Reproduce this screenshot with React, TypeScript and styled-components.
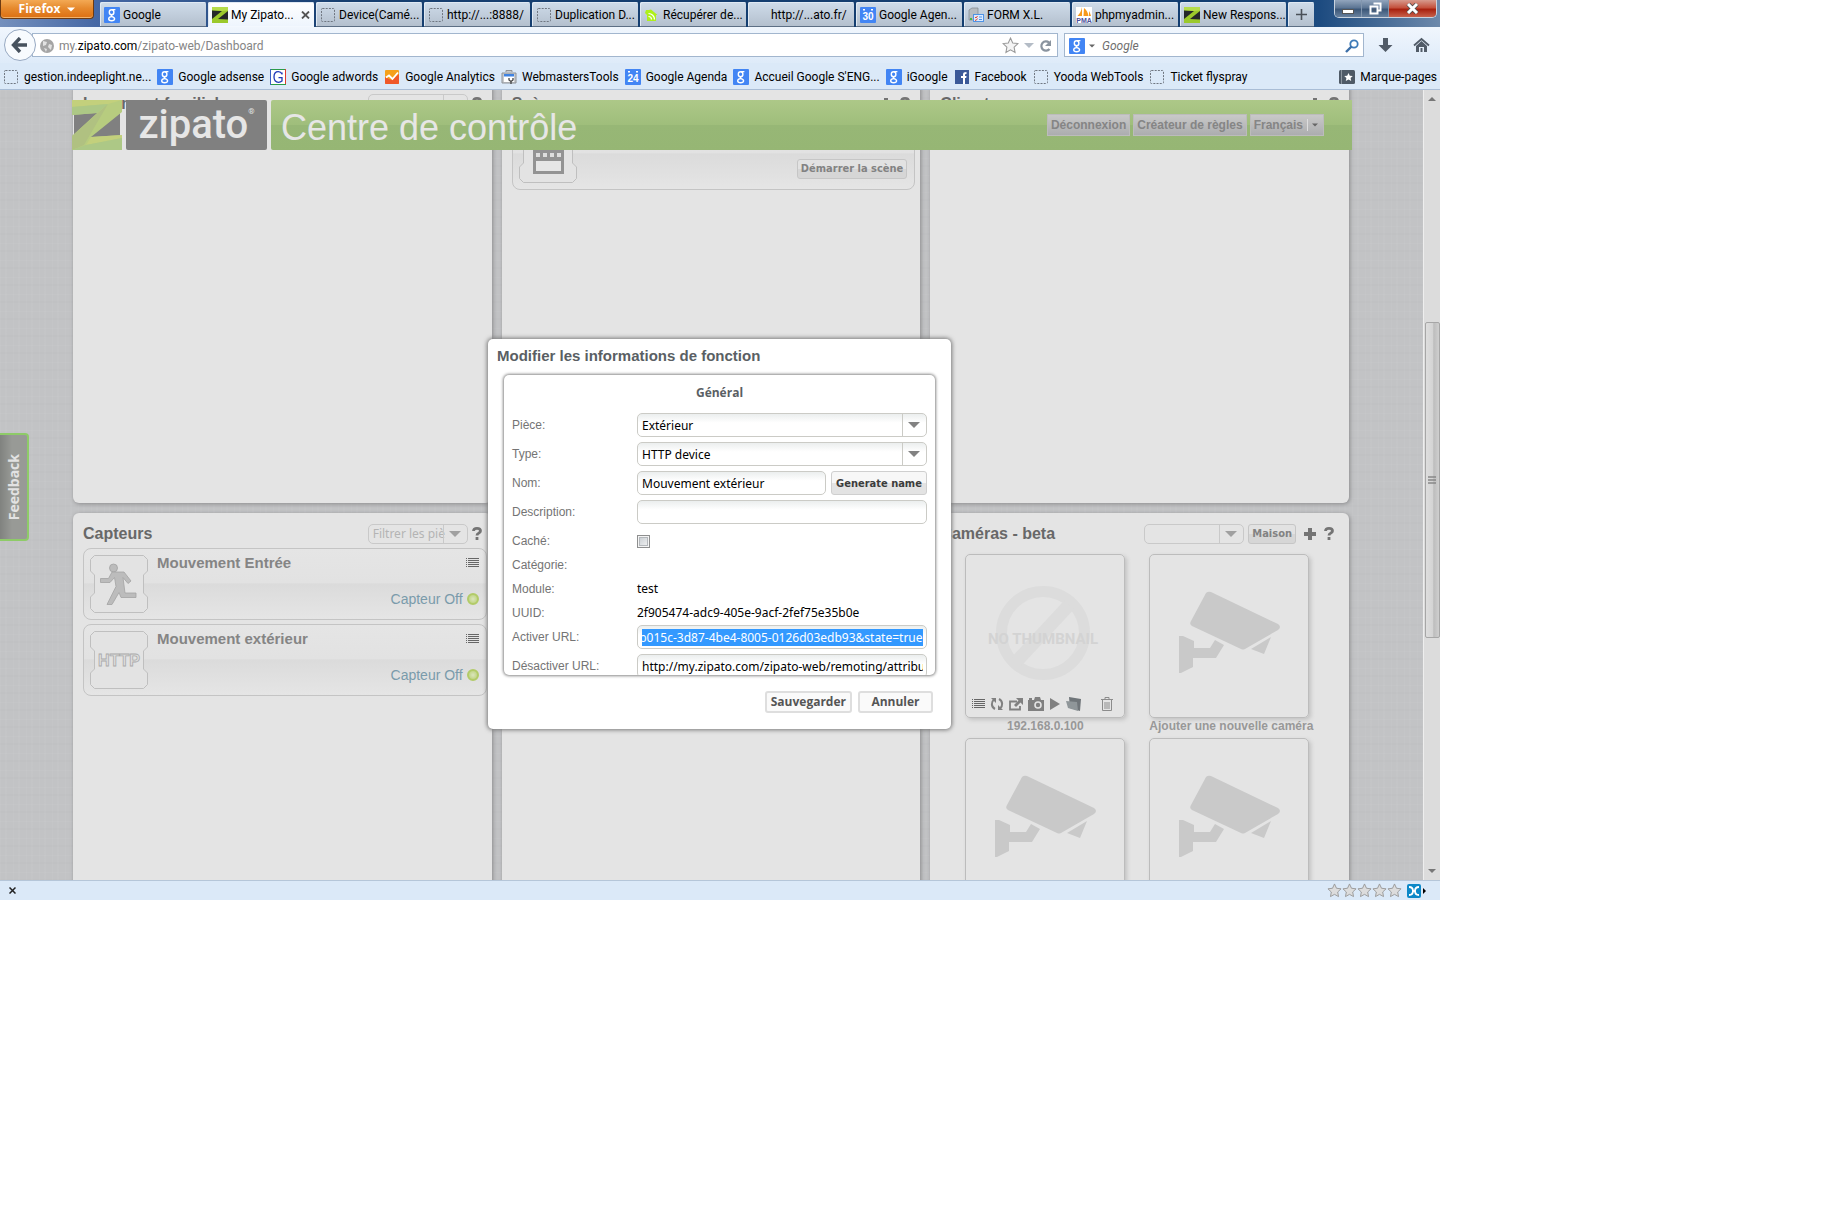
import React, { useEffect, useRef } from "react";
import styled, { createGlobalStyle, css } from "styled-components";

const CHROME = `Roboto, "Noto Sans", sans-serif`;
const UI = `"Noto Sans", "Open Sans", sans-serif`;
const ARIAL = `"Liberation Sans", Arial, sans-serif`;
const BOLD = `"DejaVu Sans Condensed", "DejaVu Sans", sans-serif`;

const GlobalStyle = createGlobalStyle`
  * { box-sizing: border-box; }
  body { margin: 0; background: #fff; font-family: ${ARIAL}; font-size: 12px; color: #000; }
  button, input, select { font: inherit; margin: 0; }
  svg { display: block; flex: none; }
`;

/* ---------- window chrome ---------- */

const Page = styled.div`
  height: 100vh;
  padding: 0 388px 312px 0;
`;

const Window = styled.div`
  position: relative;
  height: 100%;
  display: flex;
  flex-direction: column;
  overflow: hidden;
  background: #dbe9f8;
  font-family: ${CHROME};
  font-size: 12px;
`;

const TitleBar = styled.header`
  display: flex;
  flex: none;
  height: 27px;
  background: linear-gradient(90deg, #7590bd 0, #4668a5 96px, #173f70 340px, #123d70 1200px, #1d4b80 1320px, #6d89ab 100%);
`;

const FirefoxButton = styled.button`
  display: flex;
  align-items: center;
  justify-content: center;
  gap: 7px;
  width: 94px;
  height: 19px;
  margin-right: 6px;
  padding: 0;
  border: 1px solid #6d3a12;
  border-top: 0;
  border-radius: 0 0 4px 4px;
  background: linear-gradient(#f3a954, #e68a2e 45%, #dc6f12);
  box-shadow: inset 0 -1px 0 #f2b36c;
  color: #fff;
  font: bold 12px/18px "Open Sans", ${UI};
`;

const Tabs = styled.nav`
  display: flex;
  align-items: flex-end;
  gap: 2px;
`;

const Tab = styled.button<{ $active?: boolean }>`
  display: flex;
  align-items: center;
  gap: 3px;
  width: 106px;
  height: 25px;
  padding: 1px 4px 0;
  border: 0;
  border-bottom: 1px solid #5d6f85;
  border-radius: 2px 2px 0 0;
  background: linear-gradient(#cfdcea, #b4c0ce);
  box-shadow: inset 1px 1px 0 #e0e9f3;
  color: #000;
  white-space: nowrap;
  text-align: left;
  ${(p) => p.$active && css`
    border-bottom-color: #f3f8fe;
    background: linear-gradient(#fff, #eef5fd);
  `}
`;

const TabLabel = styled.span`
  flex: 1;
`;

const NewTab = styled(Tab)`
  width: 26px;
  justify-content: center;
`;

const WindowControls = styled.div`
  display: flex;
  height: 18px;
  margin: 0 3px 0 auto;
  border: 1px solid #c9d3df;
  border-top: 0;
  border-radius: 0 0 5px 5px;
  overflow: hidden;
`;

const WindowControl = styled.button<{ $close?: boolean }>`
  display: flex;
  align-items: center;
  justify-content: center;
  width: ${(p) => (p.$close ? 47 : 27)}px;
  padding: 0;
  border: 0;
  border-right: ${(p) => (p.$close ? "0" : "1px solid #8296ae")};
  background: ${(p) => p.$close
    ? "linear-gradient(#d79a8d, #c4513d 45%, #a8210f 55%, #c8614b)"
    : "linear-gradient(#92a5bd, #5d7694 45%, #3c5778 55%, #69829f)"};
`;

const NavBar = styled.div`
  display: flex;
  align-items: center;
  flex: none;
  height: 36px;
  background: linear-gradient(#f0f6fd, #deebf9);
`;

const BackButton = styled.button`
  display: flex;
  align-items: center;
  justify-content: center;
  width: 32px;
  height: 32px;
  margin: 0 -4px 0 4px;
  padding: 0 2px 0 0;
  border: 1px solid #97a9c2;
  border-radius: 50%;
  background: #f8fbfe;
  z-index: 1;
`;

const UrlBar = styled.div`
  display: flex;
  align-items: center;
  flex: 1;
  gap: 5px;
  height: 24px;
  padding: 1px 5px 0 7px;
  border: 1px solid #a2b6ce;
  background: #fff;
  color: #858585;
`;

const Url = styled.div`
  flex: 1;
  outline: none;
  b { font-weight: normal; color: #000; }
`;

const SearchBar = styled.form`
  display: flex;
  align-items: center;
  gap: 4px;
  width: 300px;
  height: 24px;
  margin: 0 14px 0 6px;
  padding: 1px 4px 0;
  border: 1px solid #a2b6ce;
  background: #fff;
`;

const SearchInput = styled.input`
  flex: 1;
  min-width: 0;
  padding: 0 3px;
  border: 0;
  outline: 0;
  background: none;
  font-style: italic;
  &::placeholder { color: #6f6f6f; opacity: 1; }
`;

const ChromeButton = styled.button`
  display: flex;
  padding: 0;
  border: 0;
  background: none;
`;

const NavActions = styled.div`
  display: flex;
  gap: 20px;
  margin-right: 10px;
`;

const Bookmarks = styled.nav`
  display: flex;
  align-items: center;
  flex: none;
  gap: 6px;
  height: 27px;
  padding: 1px 3px 0;
  border-bottom: 1px solid #a9bdd6;
  background: #dbe9f8;
`;

const Bookmark = styled.a`
  display: flex;
  align-items: center;
  gap: 5px;
  color: #000;
  line-height: 18px;
  white-space: nowrap;
  text-decoration: none;
  &:last-child { margin-left: auto; }
`;

const AddonBar = styled.footer`
  display: flex;
  align-items: center;
  flex: none;
  height: 20px;
  padding: 0 13px 0 9px;
  border-top: 1px solid #b5c6d9;
  background: #dbe9f8;
`;

const Rating = styled.div`
  display: flex;
  margin: 0 5px 0 auto;
`;

/* ---------- page area ---------- */

const Viewport = styled.div`
  position: relative;
  display: flex;
  flex: 1;
  min-height: 0;
`;

const Content = styled.main`
  flex: 1;
  min-width: 0;
  overflow: hidden;
  font-family: ${ARIAL};
  background:
    repeating-linear-gradient(90deg, rgba(255,255,255,.04) 0 1px, transparent 1px 5px, rgba(255,255,255,.03) 5px 7px, transparent 7px 13px),
    repeating-linear-gradient(rgba(255,255,255,.04) 0 1px, transparent 1px 7px, rgba(0,0,0,.01) 7px 9px, transparent 9px 17px),
    #c2c3c5;
`;

const Dashboard = styled.div`
  display: grid;
  grid-template-columns: repeat(3, 1fr);
  grid-auto-rows: 420px;
  gap: 10px;
  margin: -7px 74px 0 73px;
`;

const Panel = styled.section`
  min-width: 0;
  padding: 0 5px 0 10px;
  border-radius: 6px;
  background: #e4e4e4;
  box-shadow: 1px 1px 4px #8a8a8c;
`;

const PanelHeader = styled.header<{ $inset?: boolean }>`
  display: flex;
  align-items: center;
  gap: 4px;
  height: 35px;
  padding: 6px ${(p) => (p.$inset ? 10 : 5)}px 0 0;
`;

const PanelTitle = styled.h2`
  flex: 1;
  margin: 0;
  color: #686868;
  font-size: 16px;
  line-height: 20px;
`;

const IconButton = styled.button<{ $wide?: boolean }>`
  display: flex;
  justify-content: center;
  width: ${(p) => (p.$wide ? 20 : 10)}px;
  padding: 0;
  border: 0;
  background: none;
  color: #747474;
`;

const ComboBox = styled.span<{ $small?: boolean }>`
  display: grid;
  grid-template-columns: 1fr 24px;
  align-items: center;
  width: ${(p) => (p.$small ? "100px" : "100%")};
  height: ${(p) => (p.$small ? 20 : 24)}px;
  border: 1px solid ${(p) => (p.$small ? "#c9c9c9" : "#cbcbc6")};
  border-radius: 5px;
  background: ${(p) => (p.$small ? "#e4e4e4" : "linear-gradient(#ebeeee, #fff 40%)")};
  overflow: hidden;
  svg {
    grid-area: 1 / 2;
    justify-self: center;
    pointer-events: none;
  }
  &::after {
    content: "";
    grid-area: 1 / 2;
    height: 100%;
    border-left: 1px solid ${(p) => (p.$small ? "#c9c9c9" : "#cbcbc6")};
    pointer-events: none;
  }
`;

const Select = styled.select<{ $small?: boolean }>`
  grid-area: 1 / 1 / 2 / 3;
  width: 100%;
  height: 100%;
  padding: 0 ${(p) => (p.$small ? 20 : 24)}px 0 4px;
  border: 0;
  outline: 0;
  appearance: none;
  background: none;
  color: ${(p) => (p.$small ? "#b4b4b4" : "#000")};
  font-family: ${UI};
  font-size: 12px;
`;

const SoftButton = styled.button`
  height: 20px;
  padding: 0 3px;
  border: 1px solid #c6c6c6;
  border-radius: 3px;
  background: linear-gradient(#e2e2e2 50%, #d6d6d6 50%);
  color: #828282;
  font: bold 11px/18px ${BOLD};
  white-space: nowrap;
`;

const Card = styled.article`
  display: flex;
  gap: 9px;
  height: 72px;
  margin-bottom: 4px;
  padding: 6px 7px 6px 6px;
  border: 1px solid #c4c4c4;
  border-radius: 8px;
  background: linear-gradient(#e5e5e5, #e2e2e2 48%, #dbdbdb 50%, #e5e5e5);
`;

const CardBody = styled.div`
  display: flex;
  flex: 1;
  flex-direction: column;
  justify-content: space-between;
  padding-bottom: 4px;
`;

const CardRow = styled.div`
  display: flex;
  align-items: center;
  justify-content: space-between;
`;

const CardTitle = styled.h3`
  margin: 0;
  color: #858585;
  font-size: 15px;
  line-height: 16px;
`;

const Status = styled.span`
  display: flex;
  align-items: center;
  gap: 4px;
  margin-left: auto;
  color: #7a9bab;
  font-size: 14px;
  line-height: 20px;
`;

const Led = styled.i`
  width: 12px;
  height: 12px;
  border: 2px solid #b2cb68;
  border-radius: 50%;
  background: radial-gradient(#dbe5bd, #b9d074);
`;

const CameraGrid = styled.div`
  display: grid;
  grid-template-columns: 160px 160px;
  column-gap: 24px;
  margin: 6px 0 0 25px;
`;

const Figure = styled.figure`
  margin: 0;
`;

const Thumb = styled.div`
  display: flex;
  flex-direction: column;
  align-items: center;
  height: 164px;
  border: 1px solid #bcbcbc;
  border-radius: 5px;
  box-shadow: 2px 2px 4px #c2c2c2;
`;

const Caption = styled.figcaption`
  height: 20px;
  color: #989898;
  font-size: 12px;
  font-weight: bold;
  line-height: 16px;
  text-align: center;
  white-space: nowrap;
`;

const Tools = styled.div`
  display: flex;
  align-items: center;
  align-self: stretch;
  gap: 5px;
  padding: 0 11px 0 6px;
  button:last-child { margin-left: auto; }
`;

/* ---------- fixed brand bar ---------- */

const BrandBar = styled.header`
  position: absolute;
  top: 10px;
  left: 72px;
  right: 88px;
  display: flex;
  height: 50px;
  gap: 4px;
  font-family: ${ARIAL};
`;

const Wordmark = styled.div`
  display: flex;
  justify-content: center;
  width: 141px;
  border-radius: 2px;
  background: #808080;
  color: #e6e6e6;
  font: 500 40px/50px Roboto, sans-serif;
  sup { font-size: 8px; line-height: 24px; }
`;

const Banner = styled.div`
  display: flex;
  align-items: center;
  flex: 1;
  gap: 3px;
  padding: 0 28px 0 10px;
  border-radius: 2px 0 0 2px;
  background: linear-gradient(#adc888, #9fbe7b 50%, #97b776 50%, #96b674);
`;

const BannerTitle = styled.h1`
  flex: 1;
  margin: 0;
  padding-top: 5px;
  color: #e6e6e6;
  font-size: 36px;
  font-weight: normal;
  line-height: 45px;
`;

const BannerButton = styled.button`
  display: flex;
  align-items: center;
  height: 22px;
  padding: 0 3px;
  border: 1px solid #bcbcbc;
  background: linear-gradient(#c9c9c9, #acadaf);
  color: #858585;
  font-size: 12px;
  font-weight: bold;
`;

const MenuArrow = styled.span`
  display: flex;
  margin-left: 4px;
  padding: 4px 2px 4px 4px;
  border-left: 1px solid #dedede;
`;

const Feedback = styled.a`
  position: absolute;
  top: 343px;
  left: 0;
  display: flex;
  align-items: center;
  justify-content: center;
  width: 29px;
  height: 108px;
  border: 2px solid #8ecb68;
  border-left: 0;
  border-radius: 0 4px 4px 0;
  background: linear-gradient(90deg, #80827f, #989a96 12px);
  color: #e2e2e2;
  font: bold 14px/20px "Open Sans", sans-serif;
  text-decoration: none;
  span { writing-mode: vertical-rl; transform: rotate(180deg); }
`;

/* ---------- scroll bar ---------- */

const ScrollBar = styled.div`
  display: flex;
  flex-direction: column;
  align-items: center;
  width: 17px;
  padding: 7px 0;
  border-left: 1px solid #eee;
  background: #dcdcdc;
`;

const ScrollThumb = styled.div`
  display: flex;
  align-items: center;
  justify-content: center;
  width: 15px;
  height: 316px;
  margin: 221px 0 auto;
  border: 1px solid #a6a6a6;
  border-radius: 2px;
  background: linear-gradient(90deg, #dedede, #d4d4d4 50%, #bdbdbd 60%, #cfcfcf);
`;

/* ---------- dialog ---------- */

const Dialog = styled.section`
  position: absolute;
  top: 249px;
  left: 50%;
  width: 463px;
  margin-left: -232px;
  padding: 7px 16px 16px;
  border-radius: 5px;
  background: #fff;
  box-shadow: 0 0 4px 1px #777;
  font-family: ${ARIAL};
`;

const DialogTitle = styled.h2`
  margin: 0 -7px 9px;
  color: #5a5f64;
  font-size: 15px;
  line-height: 20px;
`;

const FormBox = styled.div`
  height: 300px;
  padding: 0 8px;
  border-radius: 5px;
  box-shadow: 0 0 3px 1px #888;
  overflow: hidden;
`;

const FormTitle = styled.h3`
  margin: 0;
  padding: 8px 0 10px;
  color: #5a5f64;
  font: bold 12px/20px "Open Sans", sans-serif;
  text-align: center;
`;

const Row = styled.div<{ $spaced?: boolean }>`
  display: grid;
  grid-template-columns: 125px 1fr;
  align-items: center;
  height: 24px;
  margin-bottom: ${(p) => (p.$spaced ? 5 : 0)}px;
`;

const Label = styled.label`
  color: #747474;
  font-size: 12px;
`;

const Value = styled.output`
  font-family: ${UI};
  font-size: 12px;
  line-height: 16px;
`;

const TextInput = styled.input`
  width: 100%;
  min-width: 0;
  height: 24px;
  padding: 0 3px 0 4px;
  border: 1px solid #cbcbc6;
  border-radius: 5px;
  outline: 0;
  background: linear-gradient(#ebeeee, #fff 40%);
  font-family: ${UI};
  font-size: 12px;
  &::selection { background: #3399ff; color: #fff; }
`;

const NameFields = styled.div`
  display: flex;
  gap: 5px;
`;

const GenerateButton = styled.button`
  flex: none;
  width: 96px;
  height: 24px;
  padding: 2px 0 0;
  border: 1px solid #cfcfcf;
  border-radius: 3px;
  background: linear-gradient(#f7f7f7 50%, #e3e3e3 50%);
  color: #3c3c3c;
  font: bold 11px/20px ${BOLD};
`;

const CheckBox = styled.input`
  width: 13px;
  height: 13px;
  border: 1px solid #8e8f8f;
  appearance: none;
  background: linear-gradient(135deg, #c3c9ce, #f6f6f6);
  box-shadow: inset 0 0 0 1px #f4f4f4, inset 0 0 0 2px #b4b8bc;
`;

const Actions = styled.footer`
  display: flex;
  justify-content: flex-end;
  gap: 6px;
  padding: 16px 2px 0 0;
`;

const ActionButton = styled.button`
  min-width: 75px;
  height: 22px;
  padding: 0 4px;
  border: 2px solid #dedede;
  border-radius: 3px;
  background: #fafafa;
  color: #555;
  font: bold 12px/18px "Open Sans", sans-serif;
`;

/* ---------- icons ---------- */

const G = ({ size = 16 }) => (
  <svg width={size} height={size} viewBox="0 0 16 16">
    <rect width="16" height="16" rx="1" fill="#4285f4" />
    <g fill="none" stroke="#fff" strokeWidth="1.4">
      <ellipse cx="7.6" cy="5.2" rx="2.3" ry="2.5" />
      <path d="M8 2.6h3.4M8.4 7.6c-1.8 1-1.2 1.6 0 2.1M7.8 9.6c-4.2.3-4 4.2-.2 4.2s4-3.4.4-4.2z" />
    </g>
  </svg>
);
const Blank = () => (
  <svg width="16" height="16" viewBox="0 0 16 16">
    <rect x="1.5" y="1.5" width="13" height="13" rx="1" fill="none" stroke="#6f7680" strokeDasharray="2 1.2" />
  </svg>
);
const ZFav = () => (
  <svg width="16" height="16" viewBox="0 0 16 16">
    <rect width="16" height="16" fill="#9bc92b" />
    <path d="M0 3.500 10 4 0 12zM16 4v8.500L6 12z" fill="#25282a" />
    <path d="M0 0h16v3.500L10 4 0 3z" fill="#b5dc4a" />
  </svg>
);
const Calendar = ({ day }: { day: string }) => (
  <svg width="16" height="16" viewBox="0 0 16 16">
    <rect width="16" height="16" rx="1" fill="#4285f4" />
    <path d="M3 2h2v1.500H3zM11 2h2v1.500h-2z" fill="#fff" />
    <text x="8" y="13" textAnchor="middle" fontFamily="Liberation Sans" fontWeight="bold" fontSize="10" fill="#fff">{day}</text>
  </svg>
);
const Home = () => (
  <svg width="16" height="16" viewBox="0 0 16 16">
    <path d="M7 2.500 13.500 8H12v6H3V8L1 6l1-3h3z" fill="#aef01a" />
    <path d="M4.500 6.500a6 6 0 0 1 6 6M4.500 9.500a3 3 0 0 1 3 3" stroke="#fff" strokeWidth="1.200" fill="none" />
  </svg>
);
const FormIcon = () => (
  <svg width="16" height="16" viewBox="0 0 16 16">
    <path d="M1 3 4 1h6v12H1z" fill="#b6bcc2" stroke="#7e868e" strokeWidth=".7" />
    <path d="M2 11h2v2H2z" fill="#4eb543" />
    <rect x="5.500" y="7.500" width="10" height="7" fill="#dcebff" stroke="#4f93e6" />
    <path d="m7 10 1 1 1.500-2M7 13l1 .5 1.500-2" stroke="#e2452c" fill="none" />
    <path d="M11 10h3M11 12.500h3" stroke="#4f93e6" />
  </svg>
);
const Pma = () => (
  <svg width="16" height="16" viewBox="0 0 16 16">
    <rect width="16" height="16" fill="#fff" />
    <path d="M6 0v9H1.500C3.500 7 5.500 4 6 0zM8 1c3 2 4 5 4.500 8H7.500zM13 4c1 2 1.500 3 2 5h-2z" fill="#f79a1c" />
    <text x="8" y="16" textAnchor="middle" fontFamily="Liberation Sans" fontWeight="bold" fontSize="7" fill="#4b4f9a">PMA</text>
  </svg>
);
const Adwords = () => (
  <svg width="16" height="16" viewBox="0 0 16 16">
    <rect x=".5" y=".5" width="15" height="15" fill="#fff" stroke="#2b9b48" />
    <path d="M.5 0v16" stroke="#3b5fc4" /><path d="M15.500 0v15" stroke="#e23a2e" />
    <path d="M12 5.500V3.500M12 5C11 3 9.500 2.700 8.300 2.700 5.500 2.700 4 5 4 8s1.500 5.300 4.500 5.300c1.500 0 2.700-.6 3.500-1.300V8.700H8.500" stroke="#1d38b8" strokeWidth="1.300" fill="none" />
  </svg>
);
const Analytics = () => (
  <svg width="16" height="16" viewBox="0 0 16 16">
    <rect x="1" y="1" width="14" height="14" rx="1" fill="#f5a11b" />
    <path d="M1 8l4 2 3 1 7-6v9a1 1 0 0 1-1 1H2a1 1 0 0 1-1-1z" fill="#f0592a" />
    <path d="m2 8.500 3-2 3.500 3.500L14 3.500" stroke="#fff" strokeWidth="1.800" fill="none" />
  </svg>
);
const Toolbox = () => (
  <svg width="16" height="16" viewBox="0 0 16 16">
    <path d="M5 3V1.500h6V3M1 4h14v10H1z" fill="#c9cbce" stroke="#8d9196" />
    <rect x="3" y="5" width="10" height="8" fill="#fff" />
    <path d="M3 5h10v2.500H3z" fill="#3f82e0" />
    <path d="M8 9v2l2 1.500V15M12 9v2l-2 1.500" stroke="#444" strokeWidth="1.300" fill="none" />
  </svg>
);
const Facebook = () => (
  <svg width="16" height="16" viewBox="0 0 16 16">
    <rect x="1" y="1" width="14" height="14" fill="#3b5998" />
    <path d="M9 15V9H7V7h2V5.500C9 3.800 10 3 12.500 3v2c-1.200 0-1.500.2-1.500 1v1h1.500l-.3 2H11v6z" fill="#fff" />
  </svg>
);
const StarPath = "m8 1 2.100 4.600 4.900.6-3.600 3.400.9 4.900L8 12.100l-4.300 2.400.9-4.900L1 6.200l4.900-.6z";
const BookmarksIcon = () => (
  <svg width="16" height="16" viewBox="0 0 16 16">
    <rect y="1" width="16" height="14" rx="1.500" fill="#4f5a66" />
    <path d="M2.500 1v14" stroke="#8c959e" />
    <path d="m9.500 4 1.300 2.700 3 .3-2.200 2 .6 3-2.700-1.500L6.800 12l.6-3-2.200-2 3-.3z" fill="#fff" />
  </svg>
);
const Star = ({ size = 16, fill = "#f4f4f4" }) => (
  <svg width={size} height={size} viewBox="0 0 16 16"><path d={StarPath} fill={fill} stroke="#999" /></svg>
);
const Triangle = ({ w = 12, h = 6, fill = "#858585", up = false }) => (
  <svg width={w} height={h} viewBox="0 0 12 6"><path d={up ? "M0 6h12L6 0z" : "M0 0h12L6 6z"} fill={fill} /></svg>
);
const Reload = () => (
  <svg width="13" height="14" viewBox="0 0 13 14">
    <path d="M10.500 10A4.600 4.600 0 1 1 10 3.600" fill="none" stroke="#8a949f" strokeWidth="2.200" />
    <path d="M12 1v6H6z" fill="#8a949f" />
  </svg>
);
const List = () => (
  <svg width="13" height="10" viewBox="0 0 13 10">
    <path d="M0 .5h1M0 2.500h1M0 4.500h1M0 6.500h1M0 8.500h1M2 .5h11M2 2.500h11M2 4.500h11M2 6.500h11M2 8.500h11" stroke="#666" />
  </svg>
);
const Plus = () => (
  <svg width="12" height="12" viewBox="0 0 12 12"><path d="M4 0h4v4h4v4H8v4H4V8H0V4h4z" fill="currentColor" /></svg>
);
const Help = () => (
  <svg width="10" height="13" viewBox="0 0 10 13">
    <path d="M1.500 4C1.600 2.200 3 1.400 5 1.400S8.500 2.300 8.500 4c0 2.200-3.500 2-3.500 4.400" fill="none" stroke="currentColor" strokeWidth="2.800" />
    <path d="M3.600 10h2.800v3H3.600z" fill="currentColor" />
  </svg>
);
const Plate = ({ children }: { children: React.ReactNode }) => (
  <svg width="58" height="58" viewBox="0 0 58 58">
    <path d="M4.500.5h49l4 4V16l-4 4v18l4 4v11.500l-4 4h-49l-4-4V42l4-4V20l-4-4V4.500z" fill="#e3e3e3" stroke="#bfbfbf" />
    {children}
  </svg>
);
const Runner = () => (
  <Plate>
    <g fill="#bcbcbc" stroke="#a3a3a3" strokeWidth=".8">
      <circle cx="23.500" cy="13" r="4" />
      <path d="M22 17h12l7 9-3 2.500-5-6 2 15.500h11v4.500H31l-2-5-7 12h-5l9-18-1.500-9-4.500 5h-9.500v-4h8z" />
    </g>
  </Plate>
);
const Http = () => (
  <Plate>
    <text x="29" y="35" textAnchor="middle" fontFamily="Liberation Sans" fontWeight="bold" fontSize="16" fill="#e0e0e0" stroke="#aaa" strokeWidth=".8">HTTP</text>
  </Plate>
);
const Clap = () => (
  <Plate>
    <path d="M14 20h31v29H14z" fill="#939393" />
    <path d="M17 36h25v10H17z" fill="#e6e6e6" />
    <path d="M17 28h4v4h-4zM24 28h4v4h-4zM31 28h4v4h-4zM38 28h4v4h-4z" fill="#dedede" />
  </Plate>
);
const Cctv = () => (
  <svg width="102" height="162" viewBox="0 0 102 162">
    <g fill="#c9c9c9">
      <path d="M28 38q2-2 5-1l67 32q4 3 0 6L67 94q-2 1-4 0L14 71q-3-2-1-5z" />
      <path d="M93 82l-7 17-13-5zM1 81h4l11 5v7h16l5-8 9 5-8 13H15v9l-12 6H1z" />
    </g>
  </svg>
);
const NoThumb = () => (
  <svg width="124" height="142" viewBox="0 0 124 142">
    <circle cx="60" cy="78" r="41.500" fill="none" stroke="#dcdcdc" strokeWidth="11" />
    <path d="M86 50 34 106" stroke="#dcdcdc" strokeWidth="13" />
    <text x="60" y="89" textAnchor="middle" fontFamily="Roboto" fontWeight="bold" fontSize="15" fill="#d3d3d3">NO THUMBNAIL</text>
  </svg>
);
const T = "#808080";
const toolIcons: [string, React.ReactNode][] = [
  ["Liste", <List key="l" />],
  ["Actualiser", <svg key="r" width="14" height="14" viewBox="0 0 14 14"><path d="M5 12C1 10 1 5 4 2.500M9 2c4 2 4 7 1 9.500" fill="none" stroke={T} strokeWidth="2" /><path d="M1 1h5v5zM13 13H8V8z" fill={T} /></svg>],
  ["Ouvrir", <svg key="o" width="14" height="14" viewBox="0 0 14 14"><path d="M8 4.500H1v8h10V9" fill="none" stroke={T} strokeWidth="1.800" /><path d="M7 1h7v7l-2.500-2.500L7 10 5 8l4.500-4.500z" fill={T} /></svg>],
  ["Photo", <svg key="p" width="16" height="14" viewBox="0 0 16 14"><path d="M0 3h1V1h3v2h2l1-3h5l1 3h3v11H0z" fill={T} /><circle cx="10" cy="8" r="3" fill="none" stroke="#e4e4e4" strokeWidth="1.600" /></svg>],
  ["Lire", <svg key="y" width="12" height="12" viewBox="0 0 12 12"><path d="M1 0l10 6-10 6z" fill={T} /></svg>],
  ["Dossier", <svg key="d" width="16" height="14" viewBox="0 0 16 14"><path d="M3 0l12 2-1 12-10-3z" fill="#6f7579" /><path d="M0 4l11 1 1 9-10-3z" fill="#8f9699" /></svg>],
  ["Supprimer", <svg key="s" width="12" height="14" viewBox="0 0 12 14"><path d="M0 2.500h12M4 2V.5h4V2M1.500 3v10.500h9V3M4 5v7M6 5v7M8 5v7" fill="none" stroke="#8c8c8c" /></svg>],
];

/* ---------- data ---------- */

const tabs: { label: string; icon: React.ReactNode; active?: boolean }[] = [
  { label: "Google", icon: <G /> },
  { label: "My Zipato...", icon: <ZFav />, active: true },
  { label: "Device(Camé...", icon: <Blank /> },
  { label: "http://...:8888/", icon: <Blank /> },
  { label: "Duplication D...", icon: <Blank /> },
  { label: "Récupérer de...", icon: <Home /> },
  { label: "http://...ato.fr/", icon: <svg width="16" height="16" /> },
  { label: "Google Agen...", icon: <Calendar day="30" /> },
  { label: "FORM X.L.", icon: <FormIcon /> },
  { label: "phpmyadmin...", icon: <Pma /> },
  { label: "New Respons...", icon: <ZFav /> },
];

const bookmarks: [string, React.ReactNode][] = [
  ["gestion.indeeplight.ne...", <Blank />],
  ["Google adsense", <G />],
  ["Google adwords", <Adwords />],
  ["Google Analytics", <Analytics />],
  ["WebmastersTools", <Toolbox />],
  ["Google Agenda", <Calendar day="24" />],
  ["Accueil Google S'ENG...", <G />],
  ["iGoogle", <G />],
  ["Facebook", <Facebook />],
  ["Yooda WebTools", <Blank />],
  ["Ticket flyspray", <Blank />],
  ["Marque-pages", <BookmarksIcon />],
];

const sensors = [
  { name: "Mouvement Entrée", icon: <Runner /> },
  { name: "Mouvement extérieur", icon: <Http /> },
];

/* ---------- components ---------- */

const Combo = ({ id, value, small }: { id: string; value: string; small?: boolean }) => (
  <ComboBox $small={small}>
    <Select id={id} $small={small} aria-label={small ? "Filtrer les pièces" : undefined}>
      <option>{value}</option>
    </Select>
    <Triangle fill={small ? "#a0a0a0" : "#828282"} />
  </ComboBox>
);

const HelpButton = () => <IconButton aria-label="Aide"><Help /></IconButton>;
const AddButton = () => <IconButton $wide aria-label="Ajouter"><Plus /></IconButton>;

const Camera = () => (
  <Figure>
    <Thumb><Cctv /></Thumb>
    <Caption>Ajouter une nouvelle caméra</Caption>
  </Figure>
);

function EditDialog() {
  const urlRef = useRef<HTMLInputElement>(null);
  useEffect(() => {
    const el = urlRef.current;
    if (!el) return;
    el.focus({ preventScroll: true });
    el.select();
    el.scrollLeft = el.scrollWidth;
  }, []);
  return (
    <Dialog role="dialog" aria-labelledby="dialog-title">
      <DialogTitle id="dialog-title">Modifier les informations de fonction</DialogTitle>
      <FormBox>
        <FormTitle>Général</FormTitle>
        <Row $spaced><Label htmlFor="room">Pièce:</Label><Combo id="room" value="Extérieur" /></Row>
        <Row $spaced><Label htmlFor="type">Type:</Label><Combo id="type" value="HTTP device" /></Row>
        <Row $spaced>
          <Label htmlFor="name">Nom:</Label>
          <NameFields>
            <TextInput id="name" defaultValue="Mouvement extérieur" />
            <GenerateButton>Generate name</GenerateButton>
          </NameFields>
        </Row>
        <Row $spaced><Label htmlFor="desc">Description:</Label><TextInput id="desc" /></Row>
        <Row><Label htmlFor="hidden">Caché:</Label><CheckBox id="hidden" type="checkbox" /></Row>
        <Row><Label as="span">Catégorie:</Label></Row>
        <Row><Label htmlFor="module">Module:</Label><Value id="module">test</Value></Row>
        <Row><Label htmlFor="uuid">UUID:</Label><Value id="uuid">2f905474-adc9-405e-9acf-2fef75e35b0e</Value></Row>
        <Row $spaced><Label htmlFor="on">Activer URL:</Label><TextInput id="on" ref={urlRef} defaultValue="attribute=b015c-3d87-4be4-8005-0126d03edb93&state=true" /></Row>
        <Row $spaced><Label htmlFor="off">Désactiver URL:</Label><TextInput id="off" defaultValue="http://my.zipato.com/zipato-web/remoting/attribut" /></Row>
      </FormBox>
      <Actions>
        <ActionButton>Sauvegarder</ActionButton>
        <ActionButton>Annuler</ActionButton>
      </Actions>
    </Dialog>
  );
}

export default function App() {
  return (
    <Page>
      <GlobalStyle />
      <Window>
        <TitleBar>
          <FirefoxButton>Firefox <Triangle w={8} h={5} fill="#fff" /></FirefoxButton>
          <Tabs>
            {tabs.map((t) => (
              <Tab key={t.label} $active={t.active}>
                {t.icon}
                <TabLabel>{t.label}</TabLabel>
                {t.active && (
                  <svg width="9" height="8" viewBox="0 0 9 8"><path d="m1 .5 7 7M8 .5l-7 7" stroke="#555" strokeWidth="1.800" /></svg>
                )}
              </Tab>
            ))}
            <NewTab aria-label="Nouvel onglet">
              <svg width="11" height="11" viewBox="0 0 11 11"><path d="M5.500 0v11M0 5.500h11" stroke="#4a5058" strokeWidth="1.600" /></svg>
            </NewTab>
          </Tabs>
          <WindowControls>
            <WindowControl aria-label="Réduire"><svg width="12" height="12" viewBox="0 0 12 12"><rect x=".5" y="6.500" width="11" height="4" fill="#fff" stroke="#555" /></svg></WindowControl>
            <WindowControl aria-label="Restaurer"><svg width="13" height="13" viewBox="0 0 13 13"><path d="M4.500 1.500h7v7h-2M1.500 4.500h7v7h-7z" fill="none" stroke="#fff" strokeWidth="2" /><rect x="4" y="7" width="2" height="2" fill="#4b5b70" /></svg></WindowControl>
            <WindowControl $close aria-label="Fermer"><svg width="13" height="11" viewBox="0 0 13 11"><path d="m2 1 9 9M11 1l-9 9" stroke="#4b4b4b" strokeWidth="4.500" /><path d="m2 1 9 9M11 1l-9 9" stroke="#fff" strokeWidth="3" /></svg></WindowControl>
          </WindowControls>
        </TitleBar>

        <NavBar>
          <BackButton aria-label="Précédent">
            <svg width="17" height="16" viewBox="0 0 17 16"><path d="M9 1 2.500 8 9 15M3 8h13" fill="none" stroke="#47525e" strokeWidth="3.400" /></svg>
          </BackButton>
          <UrlBar>
            <svg width="14" height="14" viewBox="0 0 14 14"><circle cx="7" cy="7" r="7" fill="#a5a5a5" /><path d="M3 2l4 1-1 3-3 1zM9 5l3 1-1 5-3-3zM4 9l3 1-1 3z" fill="#e2e2e2" /></svg>
            <Url contentEditable suppressContentEditableWarning role="textbox" aria-label="Adresse">my.<b>zipato.com</b>/zipato-web/Dashboard</Url>
            <Star size={17} />
            <Triangle w={10} h={7} fill="#b4bcc6" />
            <ChromeButton aria-label="Recharger"><Reload /></ChromeButton>
          </UrlBar>
          <SearchBar>
            <G />
            <Triangle w={6} h={4} fill="#666" />
            <SearchInput aria-label="Recherche" placeholder="Google" />
            <ChromeButton aria-label="Rechercher">
              <svg width="14" height="14" viewBox="0 0 14 14"><circle cx="9" cy="5" r="3.700" fill="none" stroke="#3d7bb8" strokeWidth="1.800" /><path d="M6.500 7.500 1 13" stroke="#3d6fa8" strokeWidth="2.400" /></svg>
            </ChromeButton>
          </SearchBar>
          <NavActions>
            <ChromeButton aria-label="Téléchargements"><svg width="15" height="16" viewBox="0 0 15 16"><path d="M5 1h5v7h4.500l-7 7-7-7H5z" fill="#525c68" /></svg></ChromeButton>
            <ChromeButton aria-label="Accueil"><svg width="17" height="16" viewBox="0 0 17 16"><path d="M1 8.500 8.500 2 16 8.500" fill="none" stroke="#525c68" strokeWidth="1.800" /><path d="M3 9l5.500-5L14 9v6h-3v-5H6v5H3zM7.500 11h2v4h-2z" fill="#525c68" /></svg></ChromeButton>
          </NavActions>
        </NavBar>

        <Bookmarks>
          {bookmarks.map(([label, icon]) => (
            <Bookmark key={label} href="#">{icon}{label}</Bookmark>
          ))}
        </Bookmarks>

        <Viewport>
          <Content>
            <Dashboard>
              <Panel>
                <PanelHeader>
                  <PanelTitle>Logement familial</PanelTitle>
                  <Combo small id="filter-home" value="" />
                  <HelpButton />
                </PanelHeader>
              </Panel>
              <Panel>
                <PanelHeader><PanelTitle>Scènes</PanelTitle><AddButton /><HelpButton /></PanelHeader>
                <Card>
                  <Clap />
                  <CardBody>
                    <CardRow />
                    <CardRow><span /><SoftButton>Démarrer la scène</SoftButton></CardRow>
                  </CardBody>
                </Card>
              </Panel>
              <Panel>
                <PanelHeader><PanelTitle>Climat</PanelTitle><AddButton /><HelpButton /></PanelHeader>
              </Panel>
              <Panel>
                <PanelHeader>
                  <PanelTitle>Capteurs</PanelTitle>
                  <Combo small id="filter-sensors" value="Filtrer les piè" />
                  <HelpButton />
                </PanelHeader>
                {sensors.map((s) => (
                  <Card key={s.name}>
                    {s.icon}
                    <CardBody>
                      <CardRow>
                        <CardTitle>{s.name}</CardTitle>
                        <ChromeButton aria-label="Menu"><List /></ChromeButton>
                      </CardRow>
                      <Status>Capteur Off <Led /></Status>
                    </CardBody>
                  </Card>
                ))}
              </Panel>
              <Panel />
              <Panel>
                <PanelHeader $inset>
                  <PanelTitle>Caméras - beta</PanelTitle>
                  <Combo small id="filter-cams" value="" />
                  <SoftButton>Maison</SoftButton>
                  <AddButton />
                  <HelpButton />
                </PanelHeader>
                <CameraGrid>
                  <Figure>
                    <Thumb>
                      <NoThumb />
                      <Tools>
                        {toolIcons.map(([name, icon]) => (
                          <ChromeButton key={name} aria-label={name}>{icon}</ChromeButton>
                        ))}
                      </Tools>
                    </Thumb>
                    <Caption>192.168.0.100</Caption>
                  </Figure>
                  <Camera />
                  <Camera />
                  <Camera />
                </CameraGrid>
              </Panel>
            </Dashboard>
          </Content>

          <ScrollBar>
            <Triangle w={8} h={4} fill="#777" up />
            <ScrollThumb>
              <svg width="8" height="8" viewBox="0 0 8 8"><path d="M0 1h8M0 4h8M0 7h8" stroke="#888" strokeWidth="1.400" /></svg>
            </ScrollThumb>
            <Triangle w={8} h={4} fill="#777" />
          </ScrollBar>

          <BrandBar>
            <svg width="50" height="50" viewBox="0 0 50 50">
              <path d="M2 10h46v30H2z" fill="#808080" />
              <path d="M0 0h50v12L19 37l31-2v15H0V36l25-23L0 15z" fill="#b7cc7f" />
              <path d="M0 0h50L36 4 0 7zM19 37l31-2v3L14 45z" fill="#c3d07c" />
              <path d="M0 36 36 4 12 45 0 50z" fill="#b0c181" />
              <path d="M0 7 36 4 25 13 0 15zM14 45l36-7v12H0z" fill="#adc886" />
            </svg>
            <Wordmark>zipato<sup>®</sup></Wordmark>
            <Banner>
              <BannerTitle>Centre de contrôle</BannerTitle>
              <BannerButton>Déconnexion</BannerButton>
              <BannerButton>Créateur de règles</BannerButton>
              <BannerButton>Français<MenuArrow><Triangle w={6} h={4} fill="#666" /></MenuArrow></BannerButton>
            </Banner>
          </BrandBar>

          <Feedback href="#"><span>Feedback</span></Feedback>
          <EditDialog />
        </Viewport>

        <AddonBar>
          <svg width="7" height="7" viewBox="0 0 7 7"><path d="m.5.5 6 6M6.500.5l-6 6" stroke="#222" strokeWidth="1.500" /></svg>
          <Rating>{[1, 2, 3, 4, 5].map((n) => <Star key={n} size={15} fill="#dcdcdc" />)}</Rating>
          <svg width="20" height="14" viewBox="0 0 20 14"><rect width="14" height="14" rx="2" fill="#0c88c8" /><path d="M2 3c3 0 4 2 4 4s-1 4-4 4M12 3C9 3 8 5 8 7s1 4 4 4M5 7h4" fill="none" stroke="#fff" strokeWidth="1.800" /><path d="M16 4l3 3-3 3z" fill="#000" /></svg>
        </AddonBar>
      </Window>
    </Page>
  );
}
